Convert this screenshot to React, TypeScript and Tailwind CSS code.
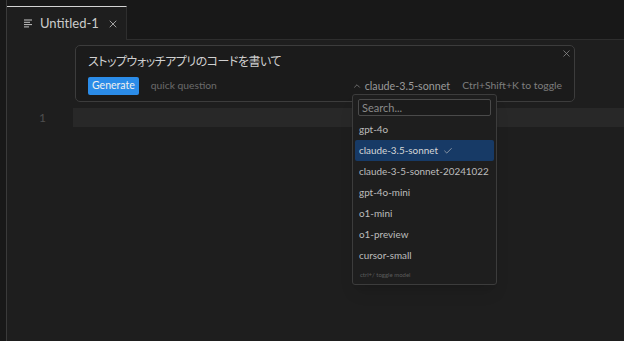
import { Check, ChevronUp, X } from "lucide-react";

const models = [
  "gpt-4o",
  "claude-3.5-sonnet",
  "claude-3-5-sonnet-20241022",
  "gpt-4o-mini",
  "o1-mini",
  "o1-preview",
  "cursor-small",
];

function FileIcon() {
  return (
    <svg width="9" height="9" viewBox="0 0 9 9" className="shrink-0">
      <rect x="0" y="0.5" width="8" height="1" fill="#c5c5c5" />
      <rect x="0" y="2.8" width="6" height="1" fill="#c5c5c5" />
      <rect x="0" y="5.1" width="8" height="1" fill="#c5c5c5" />
      <rect x="0" y="7.4" width="5" height="1" fill="#c5c5c5" />
    </svg>
  );
}

function ModelPicker() {
  return (
    <div className="absolute left-[345px] top-[54px] h-[191px] w-[145px] rounded-[3px] border border-[#3c3c3c] bg-[#1e1e1e] p-[2px] shadow-lg">
      <div className="px-[3px] pt-[2px]">
        <div className="h-[17px] rounded-[2px] border border-[#4a4a4a] bg-[#1b1b1b] px-[3px] text-[11px] leading-[15px] text-[#8a8a8a]">
          Search...
        </div>
      </div>
      <div className="mt-[3px]">
        {models.map((m) => (
          <div
            key={m}
            className={`flex h-[21px] items-center gap-[5px] whitespace-nowrap rounded-[2px] px-[4px] text-[9.9px] ${
              m === "claude-3.5-sonnet" ? "bg-[#173a66] text-[#d6d6d6]" : "text-[#bdbdbd]"
            }`}
          >
            {m}
            {m === "claude-3.5-sonnet" && <Check className="h-[10px] w-[10px] text-[#c8c8c8]" strokeWidth={1.5} />}
          </div>
        ))}
      </div>
      <div className="whitespace-nowrap px-[5px] pt-[4px] text-[6px] leading-[10px] text-[#5c5c5c]">ctrl+/ toggle model</div>
    </div>
  );
}

export default function App() {
  return (
    <div className="flex h-[341px] w-[624px] overflow-hidden bg-[#181818] font-['Lato','Noto_Sans_CJK_JP',sans-serif]">
      <div className="w-[7px] shrink-0 border-r border-[#3a3a3a]" />
      <div className="flex min-w-0 flex-1 flex-col">
        {/* tabs */}
        <div className="flex h-[40px] shrink-0">
          <div className="mt-[6px] flex w-[120px] shrink-0 items-center whitespace-nowrap border-t border-r border-t-[#d4d4d4] border-r-[#2e2e2e] bg-[#1e1e1e] pl-[17px]">
            <FileIcon />
            <span className="ml-[7px] text-[13px] text-[#cccccc]">Untitled-1</span>
            <X className="ml-[8px] h-[12px] w-[12px] text-[#cccccc]" strokeWidth={1.5} />
          </div>
          <div className="flex-1 border-b border-[#2e2e2e]" />
        </div>

        {/* editor */}
        <div className="relative flex-1 bg-[#1e1e1e]">
          <div className="relative ml-[68px] mt-[5px] h-[57px] w-[500px] rounded-[5px] border border-[#3c3c3c] bg-[#1b1b1b] px-[12px] pt-[7px]">
            <div className="text-[12px] leading-[18px] tracking-[-0.5px] text-[#d0d0d0] [font-feature-settings:'palt']">
              ストップウォッチアプリのコードを書いて
            </div>
            <div className="mt-[6px] flex h-[18px] items-center whitespace-nowrap">
              <div className="flex h-[18px] items-center rounded-[2px] bg-[#2b8ce8] px-[4px] text-[10.5px] text-[#f0f0f0]">
                Generate
              </div>
              <span className="ml-[12px] text-[10.3px] text-[#6b6b6b]">quick question</span>
              <div className="ml-auto flex items-center text-[#9a9a9a]">
                <ChevronUp className="h-[10px] w-[10px]" strokeWidth={1.5} />
                <span className="ml-[3px] text-[10.7px]">claude-3.5-sonnet</span>
                <span className="ml-[12px] text-[10.4px] text-[#7e7e7e]">Ctrl+Shift+K to toggle</span>
              </div>
            </div>
            <X className="absolute right-[2px] top-[2px] h-[11px] w-[11px] text-[#9a9a9a]" strokeWidth={1.5} />
          </div>

          <div className="mt-[6px] flex h-[19px]">
            <div className="w-[66px] pr-[27px] text-right text-[12px] leading-[19px] text-[#4e4e4e]">1</div>
            <div className="flex-1 bg-[#282828]" />
          </div>

          <ModelPicker />
        </div>
      </div>
    </div>
  );
}
